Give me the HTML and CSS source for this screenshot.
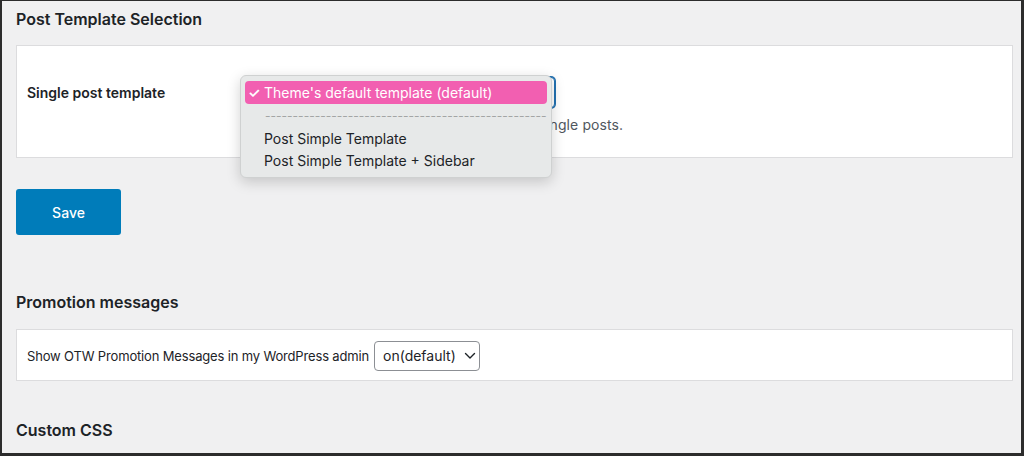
FILE: index.html
```html
<!DOCTYPE html>
<html>
<head>
<meta charset="utf-8">
<link rel="stylesheet" href="styles.css">
</head>
<body>
<div class="frame">
  <h2 class="heading first">Post Template Selection</h2>
  <div class="panel panel-template">
    <div class="field-row">
      <div class="field-label">Single post template</div>
      <div class="field-control">
        <div class="select-wrap">
          <div class="select-box"></div>
          <div class="popup">
            <div class="popup-item selected"><span class="check">✓</span>Theme's default template (default)</div>
            <div class="popup-sep">---------------------------------------------------</div>
            <div class="popup-item">Post Simple Template</div>
            <div class="popup-item">Post Simple Template + Sidebar</div>
          </div>
        </div>
        <p class="desc">Select a template that is used by default for single posts.</p>
      </div>
    </div>
  </div>
  <button class="save-btn">Save</button>
  <h2 class="heading promo">Promotion messages</h2>
  <div class="panel panel-promo">
    <span class="promo-text">Show OTW Promotion Messages in my WordPress admin</span>
    <div class="small-select">on(default)
      <svg class="chev" width="12" height="8" viewBox="0 0 12 8"><path d="M1.5 1.5 L6 6 L10.5 1.5" fill="none" stroke="#1d2327" stroke-width="1.4" stroke-linecap="round" stroke-linejoin="round"/></svg>
    </div>
  </div>
  <h2 class="heading css">Custom CSS</h2>
</div>
</body>
</html>
```

FILE: styles.css
```css
html, body {
  margin: 0;
  padding: 0;
}
body {
  font-family: Inter, "Liberation Sans", sans-serif;
  color: #1d2327;
  background: #f0f0f1;
}
.frame {
  box-sizing: border-box;
  width: 1024px;
  height: 456px;
  border-style: solid;
  border-color: #2c2c2c;
  border-width: 1px 3px 3px 2px;
  background: #f0f0f1;
  padding: 0 8px 0 14px;
  overflow: hidden;
}
.heading {
  margin: 0;
  font-size: 16px;
  line-height: 20px;
  font-weight: 600;
  color: #1d2327;
}
.heading.first { margin-top: 8px; }
.heading.promo { margin-top: 57px; }
.heading.css { margin-top: 39px; }
.panel {
  background: #fff;
  border: 1px solid #dcdcde;
}
.panel-template {
  margin-top: 16px;
  padding: 31px 10px 0 10px;
  box-sizing: content-box;
  height: 80px;
}
.field-row {
  display: flex;
}
.field-label {
  width: 216px;
  font-size: 14px;
  font-weight: 600;
  line-height: 31px;
}
.field-control {
  display: flex;
  flex-direction: column;
}
.select-wrap {
  position: relative;
  width: 312px;
  height: 31px;
}
.select-box {
  box-sizing: border-box;
  width: 312px;
  height: 31px;
  border: 1px solid #2271b1;
  border-radius: 4px;
  box-shadow: 0 0 0 1px #2271b1;
  background: #fff;
}
.popup {
  position: absolute;
  left: -3px;
  top: -2px;
  width: 312px;
  height: 103px;
  box-sizing: border-box;
  background: #e7e9e9;
  border: 1px solid #cfd1d1;
  border-radius: 6px;
  box-shadow: 0 4px 14px rgba(0,0,0,0.18);
  padding: 5px 4px;
  font-size: 14px;
}
.popup-item {
  height: 22px;
  line-height: 22px;
  padding-left: 19px;
  color: #1d2327;
}
.popup-item.selected {
  position: relative;
  background: #f25fb1;
  color: #fff;
  border-radius: 4px;
  height: 23px;
  line-height: 23px;
}
.check {
  position: absolute;
  left: 3px;
  font-size: 14px;
  font-weight: 600;
}
.popup-sep {
  height: 24px;
  line-height: 24px;
  margin-left: 20px;
  color: #a3a5a5;
  font-size: 12px;
  white-space: nowrap;
}
.desc {
  margin: 8px 0 0 0;
  font-size: 14px;
  line-height: 18px;
  letter-spacing: 0.1px;
  color: #50575e;
  white-space: nowrap;
}
.save-btn {
  display: block;
  margin-top: 31px;
  width: 105px;
  height: 46px;
  border: none;
  border-radius: 3px;
  background: #007cba;
  color: #fff;
  font-family: Inter, "Liberation Sans", sans-serif;
  font-size: 14px;
  font-weight: 500;
  cursor: pointer;
}
.panel-promo {
  margin-top: 17px;
  box-sizing: border-box;
  height: 52px;
  display: flex;
  align-items: center;
  padding: 1px 10px 0 10px;
  gap: 5px;
}
.promo-text {
  font-size: 13px;
  letter-spacing: -0.16px;
  color: #1d2327;
}
.small-select {
  box-sizing: border-box;
  height: 30px;
  width: 106px;
  border: 1px solid #8c8f94;
  border-radius: 4px;
  display: flex;
  align-items: center;
  padding: 0 8px;
  font-size: 14px;
  gap: 8px;
  justify-content: space-between;
}
.chev { flex: none; }
```
